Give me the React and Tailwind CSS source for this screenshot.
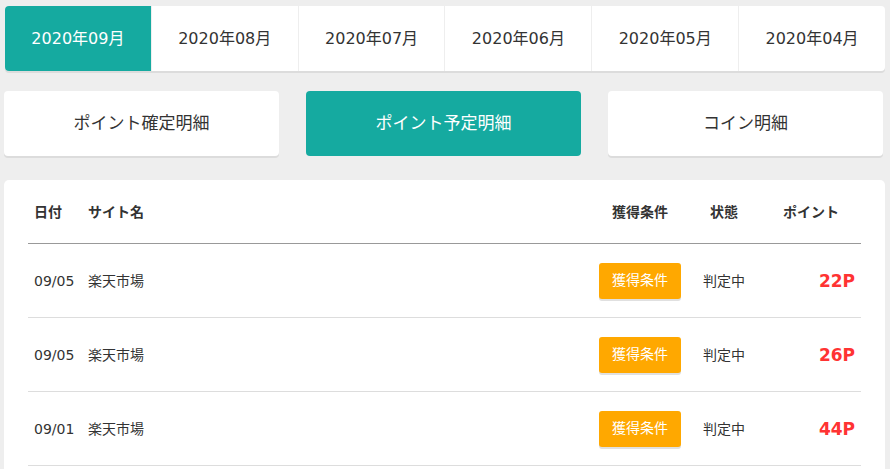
import React from "react";

const months = ["2020年09月", "2020年08月", "2020年07月", "2020年06月", "2020年05月", "2020年04月"];
const rows = [
  { date: "09/05", site: "楽天市場", pt: "22P" },
  { date: "09/05", site: "楽天市場", pt: "26P" },
  { date: "09/01", site: "楽天市場", pt: "44P" },
];

export default function App() {
  return (
    <div
      className="w-[890px] h-[469px] overflow-hidden bg-[#eeeeee] text-[#333333]"
      style={{ fontFamily: '"DejaVu Sans", "Noto Sans CJK JP", sans-serif' }}
    >
      <div className="pt-[6px] px-[5px]">
        <div className="flex rounded-[4px] overflow-hidden bg-white shadow-[0_2px_0_#dcdcdc]">
          {months.map((m, i) => (
            <div
              key={m}
              className={
                i === 0
                  ? "flex-1 h-[65px] flex items-center justify-center bg-[#15aaa0] text-white text-[16px]"
                  : "flex-1 h-[65px] flex items-center justify-center border-l border-[#eeeeee] text-[16px]"
              }
            >
              {m}
            </div>
          ))}
        </div>
      </div>

      <div className="mt-[20px] pl-[4px] pr-[7px] grid grid-cols-3 gap-[27px]">
        <div className="h-[65px] rounded-[4px] bg-white flex items-center justify-center text-[17px] shadow-[0_2px_0_#dcdcdc]">
          ポイント確定明細
        </div>
        <div className="h-[65px] rounded-[4px] bg-[#15aaa0] text-white flex items-center justify-center text-[17px]">
          ポイント予定明細
        </div>
        <div className="h-[65px] rounded-[4px] bg-white flex items-center justify-center text-[17px] shadow-[0_2px_0_#dcdcdc]">
          コイン明細
        </div>
      </div>

      <div className="mt-[24px] mx-[4px] mr-[5px] bg-white rounded-t-[5px] px-[24px] h-[300px]">
        <div className="grid grid-cols-[60px_1fr_94px_74px_100px] h-[64px] items-center border-b border-[#999999] text-[14px] font-bold pt-[1px]">
          <div className="pl-[6px]">日付</div>
          <div>サイト名</div>
          <div className="text-center">獲得条件</div>
          <div className="text-center">状態</div>
          <div className="text-center">ポイント</div>
        </div>
        {rows.map((r, i) => (
          <div
            key={i}
            className="grid grid-cols-[60px_1fr_94px_74px_100px] h-[74px] items-center border-b border-[#dddddd] text-[14px]"
          >
            <div className="pl-[6px] pt-[2px]">{r.date}</div>
            <div className="pt-[2px]">{r.site}</div>
            <div className="flex justify-center">
              <div className="w-[82px] h-[36px] rounded-[3px] bg-[#ffa800] text-white text-[14px] flex items-center justify-center shadow-[0_2px_0_#e0e0e0]">
                獲得条件
              </div>
            </div>
            <div className="text-center pt-[2px]">判定中</div>
            <div className="text-right pr-[6px] pt-[2px] text-[17px] font-bold text-[#ff3333]">{r.pt}</div>
          </div>
        ))}
      </div>
    </div>
  );
}
